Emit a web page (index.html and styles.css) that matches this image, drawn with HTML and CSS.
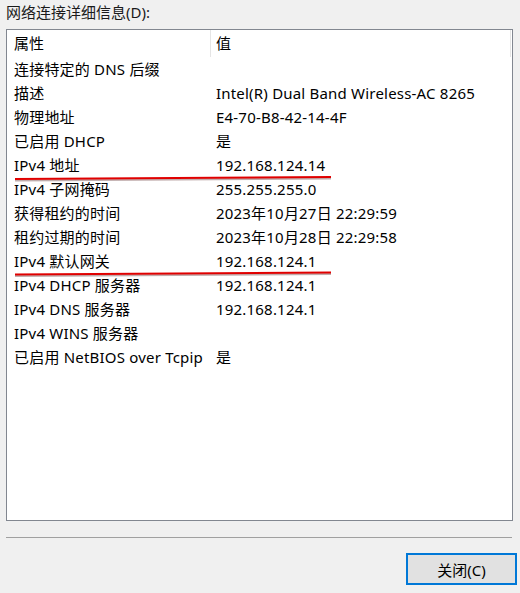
FILE: index.html
```html
<!DOCTYPE html>
<html lang="zh-CN">
<head>
<meta charset="utf-8">
<link rel="stylesheet" href="styles.css">
</head>
<body>
<div class="dialog">
  <div class="label">网络连接详细信息(D):</div>
  <div class="listbox">
    <div class="head">
      <div class="hcell c1">属性</div>
      <div class="hcell c2">值</div>
    </div>
    <div class="rows">
      <div class="row"><span class="c1">连接特定的 DNS 后缀</span><span class="c2"></span></div>
      <div class="row"><span class="c1">描述</span><span class="c2">Intel(R) Dual Band Wireless-AC 8265</span></div>
      <div class="row"><span class="c1">物理地址</span><span class="c2">E4-70-B8-42-14-4F</span></div>
      <div class="row"><span class="c1">已启用 DHCP</span><span class="c2">是</span></div>
      <div class="row"><span class="c1">IPv4 地址</span><span class="c2">192.168.124.14</span></div>
      <div class="row"><span class="c1">IPv4 子网掩码</span><span class="c2">255.255.255.0</span></div>
      <div class="row"><span class="c1">获得租约的时间</span><span class="c2">2023年10月27日 22:29:59</span></div>
      <div class="row"><span class="c1">租约过期的时间</span><span class="c2">2023年10月28日 22:29:58</span></div>
      <div class="row"><span class="c1">IPv4 默认网关</span><span class="c2">192.168.124.1</span></div>
      <div class="row"><span class="c1">IPv4 DHCP 服务器</span><span class="c2">192.168.124.1</span></div>
      <div class="row"><span class="c1">IPv4 DNS 服务器</span><span class="c2">192.168.124.1</span></div>
      <div class="row"><span class="c1">IPv4 WINS 服务器</span><span class="c2"></span></div>
      <div class="row"><span class="c1">已启用 NetBIOS over Tcpip</span><span class="c2">是</span></div>
    </div>
    <svg class="marks" width="520" height="600" viewBox="0 0 520 600">
      <path d="M8 150.5 Q170 149.5 324 148.5" stroke="#4a1010" stroke-opacity="0.35" stroke-width="2" fill="none"/>
      <path d="M8 149 Q170 148 324 147" stroke="#e00000" stroke-width="2" fill="none"/>
      <path d="M8 246 Q170 244.5 324 244" stroke="#4a1010" stroke-opacity="0.35" stroke-width="2" fill="none"/>
      <path d="M8 244.5 Q170 243 324 242.5" stroke="#e00000" stroke-width="2" fill="none"/>
    </svg>
  </div>
  <div class="sep"></div>
  <div class="footer">
    <button class="btn">关闭(C)</button>
  </div>
</div>
</body>
</html>
```

FILE: styles.css
```css
html, body {
  margin: 0;
  padding: 0;
  background: #f0f0f0;
}
body {
  font-family: "Noto Sans", "Noto Sans CJK SC", sans-serif;
  font-size: 15px;
  color: #000;
  width: 520px;
  height: 593px;
  overflow: hidden;
}
.dialog {
  display: flex;
  flex-direction: column;
  padding: 0 4px 0 6px;
}
.label {
  height: 29px;
  line-height: 24px;
  color: #1a1a1a;
}
.listbox {
  position: relative;
  width: 507px;
  height: 492px;
  border: 1px solid #828790;
  background: #fff;
  box-sizing: border-box;
  overflow: hidden;
}
.head {
  display: flex;
  height: 27px;
  align-items: center;
}
.hcell {
  height: 27px;
  line-height: 27px;
  box-sizing: border-box;
}
.hcell.c1 {
  width: 204px;
  padding-left: 7px;
  border-right: 1px solid #e5e5e5;
}
.hcell.c2 {
  flex: 1;
  padding-left: 5px;
  border-right: 1px solid #e5e5e5;
  margin-right: 1px;
}
.rows {
  display: flex;
  flex-direction: column;
}
.row {
  display: flex;
  height: 24px;
  line-height: 24px;
  white-space: nowrap;
  letter-spacing: 0.2px;
}
.row .c1 {
  width: 202px;
  padding-left: 7px;
  flex: none;
}
.row .c2 {
  padding-left: 0;
}
.marks {
  position: absolute;
  left: 0;
  top: 0;
  pointer-events: none;
}
.sep {
  margin-top: 16px;
  width: 506px;
  height: 0;
  border-top: 1px solid #a0a0a0;
}
.footer {
  display: flex;
  justify-content: flex-end;
  padding-top: 15px;
}
.btn {
  width: 111px;
  height: 32px;
  margin-right: -1px;
  background: #e1e1e1;
  border: 2px solid #0078d7;
  font-family: "Noto Sans", "Noto Sans CJK SC", sans-serif;
  font-size: 15px;
  color: #000;
  padding: 0;
}
```
